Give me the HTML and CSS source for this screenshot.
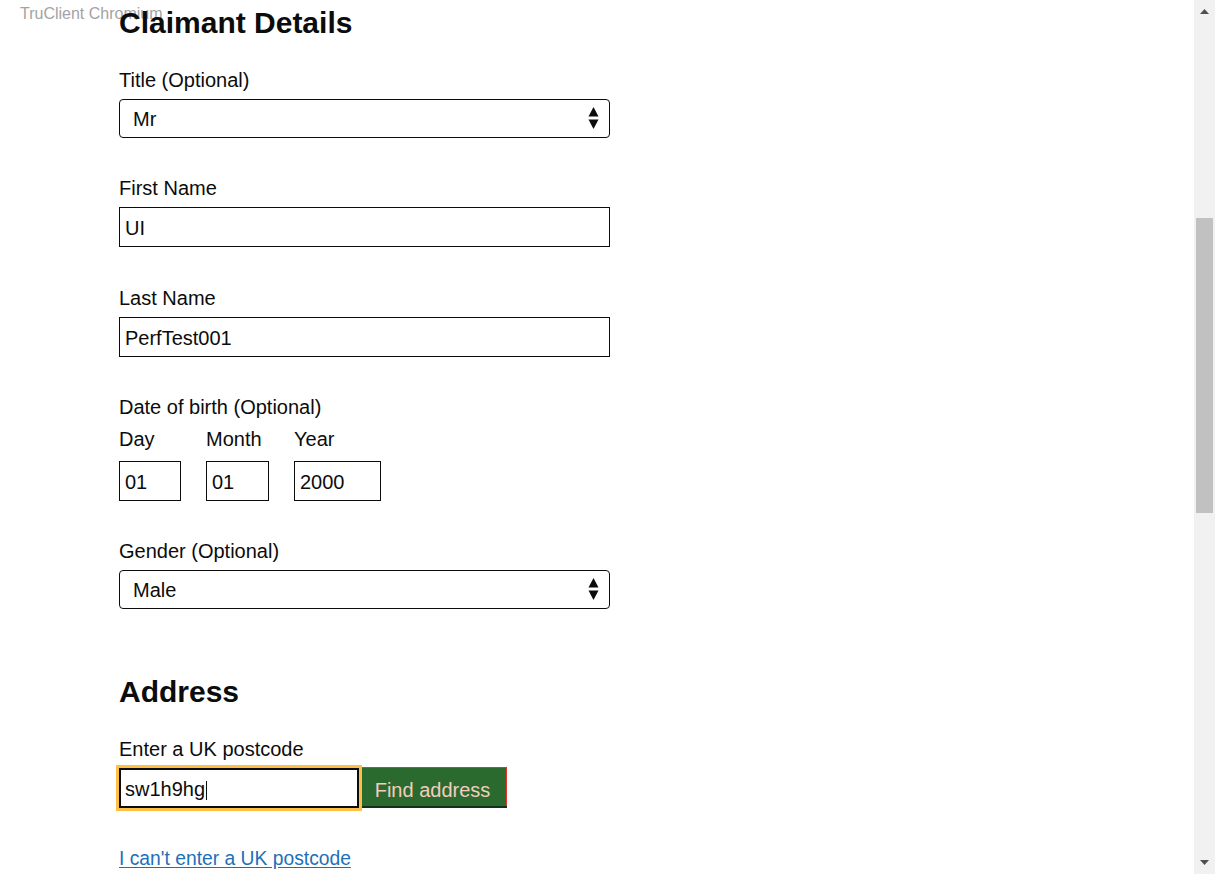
FILE: index.html
```html
<!DOCTYPE html>
<html lang="en">
<head>
<meta charset="utf-8">
<title>Claimant Details</title>
<link rel="stylesheet" href="styles.css">
</head>
<body>
<div class="watermark">TruClient Chromium</div>
<main class="page">
  <h1 class="heading">Claimant Details</h1>

  <div class="group">
    <label class="label" for="title">Title (Optional)</label>
    <div class="select-wrap">
      <select id="title" class="select"><option>Mr</option></select>
      <svg class="select-arrows" width="11" height="24" viewBox="0 0 11 24" aria-hidden="true">
        <polygon points="0.5,10.5 10.5,10.5 5.5,1" fill="#0b0c0c"/>
        <polygon points="0.5,13.5 10.5,13.5 5.5,23" fill="#0b0c0c"/>
      </svg>
    </div>
  </div>

  <div class="group group-first">
    <label class="label" for="first">First Name</label>
    <input id="first" class="input input-full" type="text" value="UI">
  </div>

  <div class="group">
    <label class="label" for="last">Last Name</label>
    <input id="last" class="input input-full" type="text" value="PerfTest001">
  </div>

  <div class="group">
    <div class="label label-legend">Date of birth (Optional)</div>
    <div class="date-row">
      <div class="date-item">
        <label class="label label-date" for="day">Day</label>
        <input id="day" class="input input-day" type="text" value="01">
      </div>
      <div class="date-item">
        <label class="label label-date" for="month">Month</label>
        <input id="month" class="input input-month" type="text" value="01">
      </div>
      <div class="date-item">
        <label class="label label-date" for="year">Year</label>
        <input id="year" class="input input-year" type="text" value="2000">
      </div>
    </div>
  </div>

  <div class="group">
    <label class="label" for="gender">Gender (Optional)</label>
    <div class="select-wrap">
      <select id="gender" class="select"><option>Male</option></select>
      <svg class="select-arrows" width="11" height="24" viewBox="0 0 11 24" aria-hidden="true">
        <polygon points="0.5,10.5 10.5,10.5 5.5,1" fill="#0b0c0c"/>
        <polygon points="0.5,13.5 10.5,13.5 5.5,23" fill="#0b0c0c"/>
      </svg>
    </div>
  </div>

  <h2 class="heading heading-address">Address</h2>

  <div class="group group-postcode">
    <div class="label">Enter a UK postcode</div>
    <div class="postcode-row">
      <div class="input input-focus" role="textbox">sw1h9hg<span class="caret"></span></div>
      <button class="button" type="button">Find address</button>
    </div>
  </div>

  <a class="link" href="#">I can't enter a UK postcode</a>
</main>

<div class="scrollbar" aria-hidden="true">
  <svg class="scroll-arrow scroll-up" width="9" height="5" viewBox="0 0 9 5"><polygon points="0,5 9,5 4.5,0" fill="#505050"/></svg>
  <div class="scroll-thumb"></div>
  <svg class="scroll-arrow scroll-down" width="9" height="5" viewBox="0 0 9 5"><polygon points="0,0 9,0 4.5,5" fill="#505050"/></svg>
</div>
</body>
</html>
```

FILE: styles.css
```css
html, body {
  margin: 0;
  height: 100%;
  overflow: hidden;
  background: #ffffff;
}

body {
  font-family: "Liberation Sans", Arial, sans-serif;
  color: #0b0c0c;
  position: relative;
}

.watermark {
  position: absolute;
  left: 20px;
  top: 6px;
  font-size: 16px;
  line-height: 16px;
  color: #a3a3a3;
}

.page {
  position: relative;
  padding: 8px 0 0 119px;
}

.heading {
  font-size: 30px;
  line-height: 30px;
  font-weight: 700;
  margin: 0 0 30px;
}

.heading-address {
  margin-top: 68px;
}

.group {
  margin-bottom: 38px;
}

.group-first {
  margin-bottom: 39px;
}

.group-postcode {
  margin-bottom: 39px;
}

.label {
  display: block;
  font-size: 20px;
  line-height: 24px;
  margin-bottom: 7px;
}

.label-legend {
  margin-bottom: 8px;
}

.label-date {
  margin-bottom: 10px;
}

.select-wrap {
  position: relative;
  width: 491px;
}

.select {
  appearance: none;
  -webkit-appearance: none;
  display: block;
  box-sizing: border-box;
  width: 491px;
  height: 39px;
  margin: 0;
  padding: 1px 0 0 13px;
  border: 1px solid #0b0c0c;
  border-radius: 4px;
  background: #ffffff;
  color: #0b0c0c;
  font-family: inherit;
  font-size: 20px;
}

.select-arrows {
  position: absolute;
  left: 469px;
  top: 7px;
  pointer-events: none;
}

.input {
  display: block;
  box-sizing: border-box;
  height: 40px;
  margin: 0;
  padding: 2px 5px 0;
  border: 1px solid #0b0c0c;
  border-radius: 0;
  background: #ffffff;
  color: #0b0c0c;
  font-family: inherit;
  font-size: 20px;
  outline: none;
}

.input-full {
  width: 491px;
}

.date-row {
  display: flex;
  gap: 25px;
}

.input-day {
  width: 62px;
}

.input-month {
  width: 63px;
}

.input-year {
  width: 87px;
}

.postcode-row {
  display: flex;
  align-items: flex-start;
}

.input-focus {
  display: flex;
  align-items: center;
  width: 240px;
  padding: 2px 4px 0;
  border: 2px solid #0b0c0c;
  outline: 3px solid #ffbf47;
  line-height: 24px;
  position: relative;
  z-index: 1;
}

.caret {
  display: inline-block;
  width: 1px;
  height: 19px;
  margin-left: 1px;
  margin-top: 3px;
  background: #0b0c0c;
}

.button {
  box-sizing: border-box;
  width: 148px;
  height: 39px;
  margin: -1px 0 0 0;
  padding: 10px 0 4px;
  border: none;
  border-top: 1px solid #e8322c;
  border-right: 1px solid #e8322c;
  border-radius: 0;
  background: #2a6a2f;
  box-shadow: 0 2px 0 #15301a;
  color: #f3cdbf;
  font-family: inherit;
  font-size: 20px;
  line-height: 24px;
  text-align: center;
}

.link {
  display: inline-block;
  font-size: 19.3px;
  line-height: 24px;
  color: #1d70b8;
  text-decoration: underline;
  text-underline-offset: 2px;
}

.scrollbar {
  position: absolute;
  top: 0;
  right: 0;
  width: 21px;
  height: 874px;
  background: #f1f1f1;
}

.scroll-thumb {
  position: absolute;
  left: 2px;
  top: 218px;
  width: 17px;
  height: 295px;
  background: #c1c1c1;
}

.scroll-arrow {
  position: absolute;
  left: 6px;
}

.scroll-up {
  top: 9px;
}

.scroll-down {
  top: 860px;
}
```
